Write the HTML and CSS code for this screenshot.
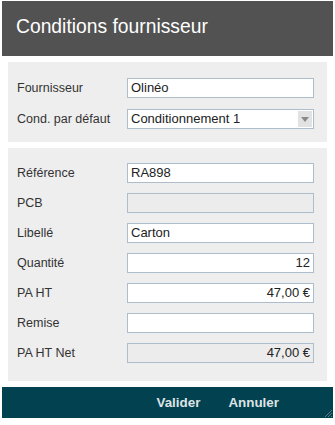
FILE: index.html
```html
<!DOCTYPE html>
<html lang="fr">
<head>
<meta charset="utf-8">
<link rel="stylesheet" href="styles.css">
</head>
<body>
<div class="dialog">
  <div class="header"><h1 class="title">Conditions fournisseur</h1></div>
  <div class="panel panel-top">
    <div class="row"><label class="label">Fournisseur</label><div class="field">Olinéo</div></div>
    <div class="row"><label class="label">Cond. par défaut</label><div class="field select">Conditionnement 1<span class="arrow"><svg width="8" height="5" viewBox="0 0 8 5"><path d="M0 0H8L4 5Z" fill="#8a8a8a"/></svg></span></div></div>
  </div>
  <div class="panel panel-main">
    <div class="row"><label class="label">Référence</label><div class="field">RA898</div></div>
    <div class="row"><label class="label">PCB</label><div class="field disabled"></div></div>
    <div class="row"><label class="label">Libellé</label><div class="field">Carton</div></div>
    <div class="row"><label class="label">Quantité</label><div class="field num">12</div></div>
    <div class="row"><label class="label">PA HT</label><div class="field num">47,00 €</div></div>
    <div class="row"><label class="label">Remise</label><div class="field num"></div></div>
    <div class="row"><label class="label">PA HT Net</label><div class="field num disabled">47,00 €</div></div>
  </div>
  <div class="footer">
    <span class="btn">Valider</span>
    <span class="btn">Annuler</span>
    <svg class="grip" width="8" height="8" viewBox="0 0 8 8"><path d="M8 1L1 8M8 4L4 8M8 7L7 8" stroke="#5a7a84" stroke-width="1"/></svg>
  </div>
</div>
</body>
</html>
```
FILE: styles.css
```css
html, body {
  margin: 0;
  padding: 0;
  background: #ffffff;
}
body {
  font-family: "Liberation Sans", Arial, sans-serif;
}
.dialog {
  width: 335px;
  padding-top: 1px;
}
.header {
  margin: 0 2px;
  height: 55px;
  background: #525252;
  display: flex;
  align-items: center;
  padding-left: 14px;
  box-sizing: border-box;
  padding-bottom: 3px;
}
.title {
  margin: 0;
  font-weight: normal;
  font-size: 19.3px;
  color: #ffffff;
}
.panel {
  margin: 6px 8px 0;
  background: #eeeeee;
  display: flex;
  flex-direction: column;
  padding: 0 13px 0 9px;
}
.panel-top {
  padding-top: 16px;
  padding-bottom: 13px;
  gap: 11px;
}
.panel-main {
  padding-top: 15px;
  padding-bottom: 18px;
  gap: 10px;
}
.row {
  display: flex;
  align-items: center;
  height: 20px;
}
.label {
  width: 110px;
  flex: none;
  font-size: 12.5px;
  color: #333333;
}
.field {
  position: relative;
  flex: 1;
  height: 20px;
  box-sizing: border-box;
  border: 1px solid #aebdcb;
  background: #ffffff;
  font-size: 13px;
  color: #222222;
  line-height: 18px;
  padding: 0 3px;
  white-space: nowrap;
}
.field.num {
  text-align: right;
}
.field.disabled {
  background: #ececec;
}
.field.select {
  padding-right: 18px;
}
.arrow {
  position: absolute;
  right: 1px;
  top: 1px;
  width: 14px;
  height: 16px;
  background: #e2e2e2;
  display: flex;
  align-items: center;
  justify-content: center;
}
.arrow svg {
  display: block;
}
.footer {
  position: relative;
  margin: 6px 2px 0;
  height: 31px;
  background: #02414f;
  display: flex;
  align-items: center;
  justify-content: flex-end;
  gap: 28px;
  padding-right: 54px;
}
.btn {
  font-size: 13.4px;
  font-weight: bold;
  color: #dde4e6;
}
.grip {
  position: absolute;
  right: 1px;
  bottom: 1px;
}
```
